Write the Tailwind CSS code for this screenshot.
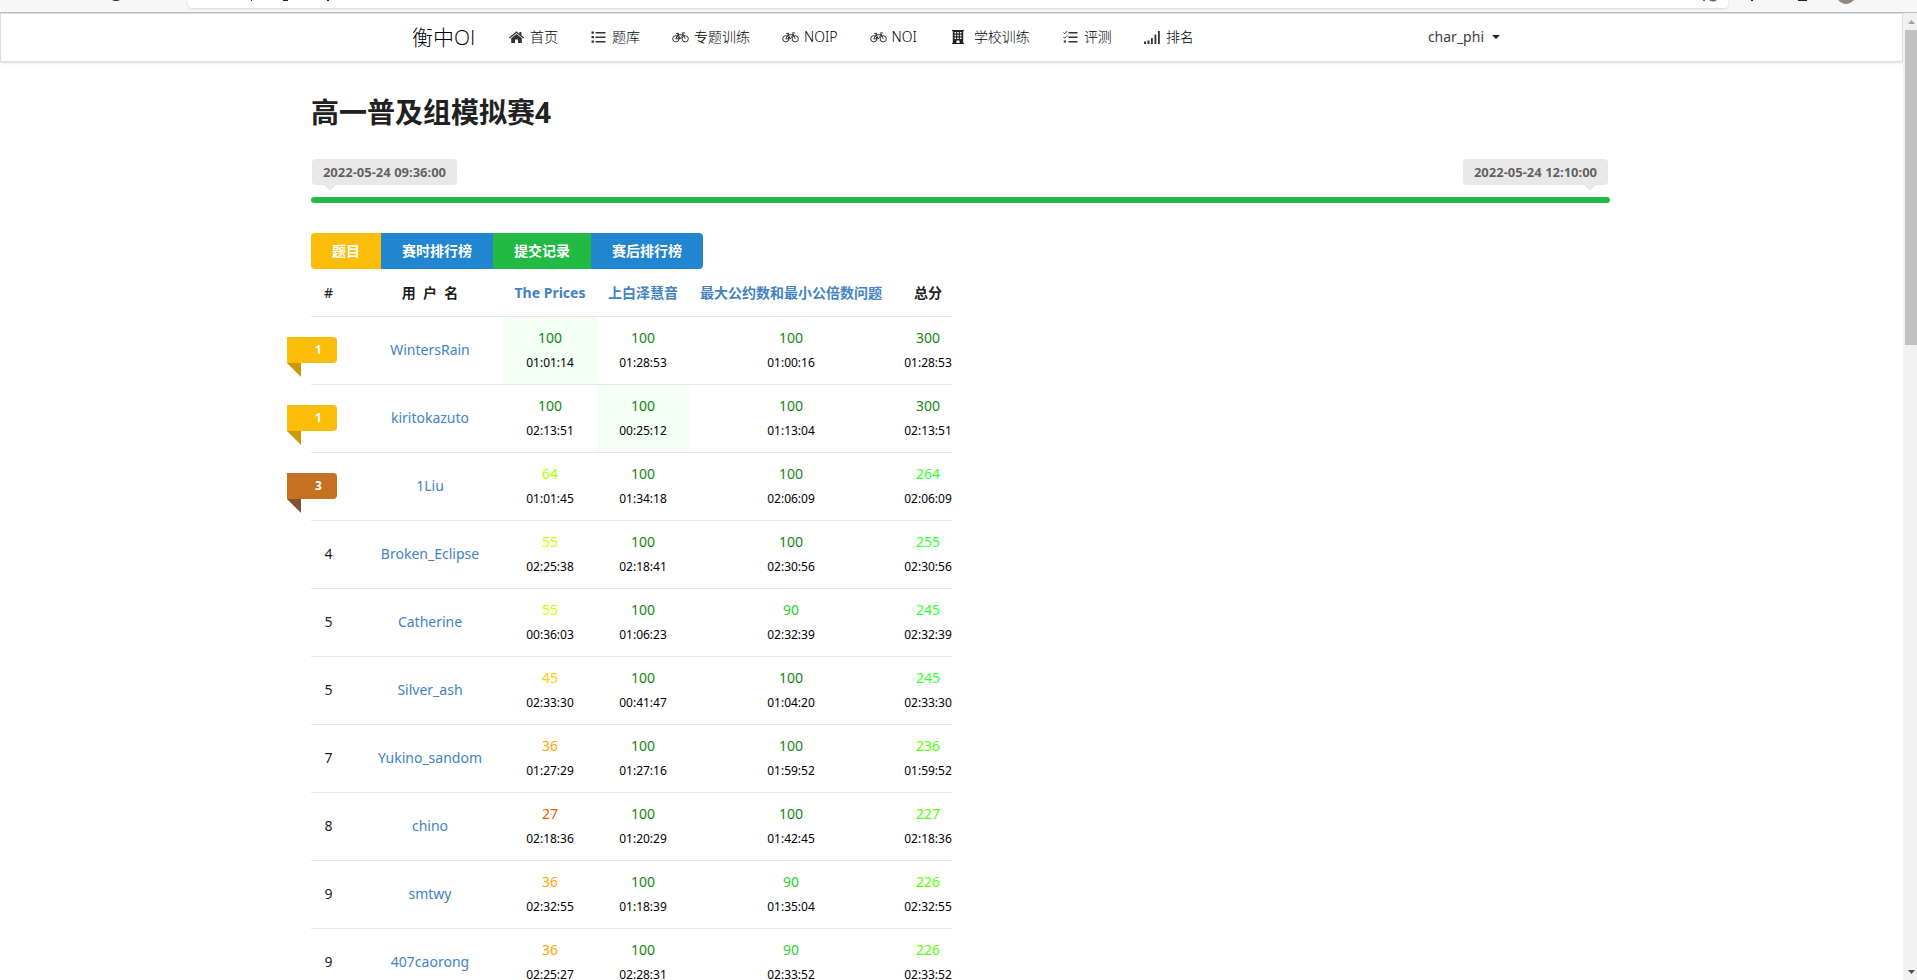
<!DOCTYPE html>
<html lang="zh-CN">
<head>
<meta charset="utf-8">
<meta name="viewport" content="width=device-width, initial-scale=1">
<title>高一普及组模拟赛4 - 衡中OI</title>
<script src="https://cdn.jsdelivr.net/npm/@tailwindcss/browser@4"></script>
</head>
<body class="flex h-screen flex-col overflow-hidden bg-white font-['Noto_Sans','Noto_Sans_CJK_SC',sans-serif] text-sm text-black/90">

<!-- Lower edge of the browser toolbar -->
<div class="flex h-[13px] shrink-0 items-start justify-between border-b border-[#bdbdbd] bg-[#f7f7f7]">
  <svg class="h-2 w-[188px] shrink-0" viewBox="0 0 188 8" aria-hidden="true"><path d="M112 0h8q-4 2-8 0z" fill="#222"/></svg>
  <div class="flex h-2 grow justify-between rounded-b bg-white shadow-sm">
    <svg class="h-2 w-48" viewBox="0 0 192 8" aria-hidden="true"><path d="M63 0h1v1h-1zM95 0h5v1h-5zM139 0h2v1h-2z" fill="#222"/></svg>
    <svg class="h-2 w-8" viewBox="0 0 32 8" aria-hidden="true"><path d="M7 0h2v1H7zM13 0h8q-4 3-8 0z" fill="#666"/></svg>
  </div>
  <svg class="h-2 w-[189px] shrink-0" viewBox="0 0 189 8" aria-hidden="true"><path d="M23 0h2v1h-2zM70 0h9v1h-9z" fill="#222"/><path d="M110 0h16q-8 8-16 0z" fill="#8f8783"/></svg>
</div>

<div class="flex min-h-0 grow">
  <div class="min-w-0 grow overflow-hidden">
    <nav class="h-[49px] border border-[#dcdcdd] bg-white shadow-sm" aria-label="主导航">
      <div class="mx-auto flex h-full max-w-[1127px] items-center pb-0.5 pl-6 font-light text-black">
        <a href="#" class="mr-[15px] w-[65px] text-[21px] leading-6 whitespace-nowrap font-['Open_Sans','Noto_Sans_CJK_SC',sans-serif] font-light">衡中OI</a>
        <a href="#" class="flex items-center gap-[5px] px-4 whitespace-nowrap">
          <svg class="h-4 w-[17px]" viewBox="0 0 17 16" fill="#333" aria-hidden="true"><path d="M8.500 2.200 1 8.500l.8 1 6.700-5.500 6.700 5.500.8-1-2.600-2.200V3h-2v1.700z"/><path d="M8.500 5 3.200 9.300V14H7v-3.600h3V14h3.800V9.300z"/></svg>首页</a>
        <a href="#" class="flex items-center gap-[5px] px-4 whitespace-nowrap">
          <svg class="h-4 w-[17px]" viewBox="0 0 17 16" fill="#333" aria-hidden="true"><path d="M1.500 2.500h2.400v2.200H1.500zM1.500 7h2.400v2.200H1.500zM1.500 11.500h2.400v2.200H1.500zM5.500 2.900h10v1.500h-10zM5.500 7.400h10v1.500h-10zM5.500 11.900h10v1.500h-10z"/></svg>题库</a>
        <a href="#" class="flex items-center gap-[5px] px-4 whitespace-nowrap">
          <svg class="h-4 w-[17px]" viewBox="0 0 17 16" fill="none" stroke="#333" aria-hidden="true"><circle cx="3.800" cy="9.800" r="3.100"/><circle cx="13.200" cy="9.800" r="3.100"/><path d="M3.800 9.800 6 5.800h5.200L8.200 9.800H3.800M8.200 9.800 5.600 4.600M4.200 4.400h2.800M13.200 9.800 10.600 3.800h2.200"/></svg>专题训练</a>
        <a href="#" class="flex items-center gap-[5px] px-4 whitespace-nowrap">
          <svg class="h-4 w-[17px]" viewBox="0 0 17 16" fill="none" stroke="#333" aria-hidden="true"><circle cx="3.800" cy="9.800" r="3.100"/><circle cx="13.200" cy="9.800" r="3.100"/><path d="M3.800 9.800 6 5.800h5.200L8.200 9.800H3.800M8.200 9.800 5.600 4.600M4.200 4.400h2.800M13.200 9.800 10.600 3.800h2.200"/></svg>NOIP</a>
        <a href="#" class="flex items-center gap-[5px] px-4 whitespace-nowrap">
          <svg class="h-4 w-[17px]" viewBox="0 0 17 16" fill="none" stroke="#333" aria-hidden="true"><circle cx="3.800" cy="9.800" r="3.100"/><circle cx="13.200" cy="9.800" r="3.100"/><path d="M3.800 9.800 6 5.800h5.200L8.200 9.800H3.800M8.200 9.800 5.600 4.600M4.200 4.400h2.800M13.200 9.800 10.600 3.800h2.200"/></svg>NOI</a>
        <a href="#" class="flex items-center gap-2 px-4 whitespace-nowrap">
          <svg class="h-4 w-[17px]" viewBox="0 0 17 16" fill="#222" aria-hidden="true"><path fill-rule="evenodd" d="M3 1h12v1h-.8v12H15v1H3v-1h.8V2H3zM5.500 3v1.600h1.600V3zM8.200 3v1.600h1.600V3zM10.900 3v1.600h1.600V3zM5.500 5.700v1.600h1.600V5.700zM8.200 5.700v1.600h1.600V5.700zM10.900 5.700v1.600h1.600V5.700zM5.500 8.400V10h1.600V8.400zM8.200 8.400V10h1.600V8.400zM10.900 8.400V10h1.600V8.400zM7.500 11.500V14h3v-2.500z"/></svg>学校训练</a>
        <a href="#" class="flex items-center gap-[5px] px-4 whitespace-nowrap">
          <svg class="h-4 w-[17px]" viewBox="0 0 17 16" fill="#333" aria-hidden="true"><path d="M6.500 2.900h9v1.500h-9zM6.500 7.400h9v1.500h-9zM6.500 11.900h9v1.500h-9zM1.800 11.600h2.200v2H1.800z"/><path d="m1.500 3.500 1.200 1.200 2.400-2.600M1.500 8l1.200 1.200 2.400-2.600" fill="none" stroke="#333"/></svg>评测</a>
        <a href="#" class="flex items-center gap-[5px] px-4 whitespace-nowrap">
          <svg class="h-4 w-[17px]" viewBox="0 0 17 16" fill="#333" aria-hidden="true"><path d="M0 12.500h2v2.500H0zM3.500 11.500h2V15h-2zM7 9h1.800v6H7zM10.500 5.500h1.800V15h-1.800zM14 2h1.800v13H14z"/></svg>排名</a>
        <button type="button" class="ml-auto flex items-center gap-2 pr-[15px] font-normal text-black/80">char_phi
          <svg class="h-1 w-2" viewBox="0 0 8 4" aria-hidden="true"><path d="M0 0h8L4 4z" fill="#222"/></svg></button>
      </div>
    </nav>

    <main class="pl-[18px]">
      <div class="mx-auto max-w-[1299px] pt-8">
        <h1 class="text-[28px] leading-9 font-bold text-[#212121]">高一普及组模拟赛4</h1>

        <div class="mt-[29px] flex justify-between pr-0.5 pl-px">
          <time class="relative h-[26px] w-[145px] rounded bg-[#e8e8e8] text-center text-[13px] leading-[26px] font-bold text-black/60">2022-05-24 09:36:00<i class="absolute -bottom-1 left-3.5 size-2 rotate-45 bg-[#e8e8e8]"></i></time>
          <time class="relative h-[26px] w-[145px] rounded bg-[#e8e8e8] text-center text-[13px] leading-[26px] font-bold text-black/60">2022-05-24 12:10:00<i class="absolute right-3.5 -bottom-1 size-2 rotate-45 bg-[#e8e8e8]"></i></time>
        </div>
        <div class="mt-3 h-1.5 rounded-[3px] bg-[#21ba45]" role="progressbar" aria-valuenow="100" aria-label="比赛进度"></div>

        <div class="mt-[30px] flex h-9 w-fit overflow-hidden rounded font-bold leading-9 text-white">
          <a href="#" class="bg-[#fbbd08] px-[21px]">题目</a>
          <a href="#" class="bg-[#2185d0] px-[21px]">赛时排行榜</a>
          <a href="#" class="bg-[#21ba45] px-[21px]">提交记录</a>
          <a href="#" class="bg-[#2185d0] px-[21px]">赛后排行榜</a>
        </div>

        <table class="w-[641px] table-fixed border-separate border-spacing-0 text-center">
          <colgroup><col class="w-[46px]"><col class="w-[146px]"><col class="w-[94px]"><col class="w-[92px]"><col class="w-[204px]"><col class="w-[59px]"></colgroup>
          <thead>
            <tr class="h-12 whitespace-nowrap">
              <th class="border-b border-[#e5e6e6] pr-[11px] font-medium">#</th>
              <th class="border-b border-[#e5e6e6] font-bold">用&nbsp;&nbsp;户&nbsp;&nbsp;名</th>
              <th class="border-b border-[#e5e6e6] font-bold"><a href="#" class="text-[#4183c4]">The Prices</a></th>
              <th class="border-b border-[#e5e6e6] font-bold"><a href="#" class="text-[#4183c4]">上白泽慧音</a></th>
              <th class="border-b border-[#e5e6e6] font-bold"><a href="#" class="text-[#4183c4]">最大公约数和最小公倍数问题</a></th>
              <th class="border-b border-[#e5e6e6] pl-[11px] font-bold">总分</th>
            </tr>
          </thead>
          <tbody id="ranks"></tbody>
        </table>
      </div>
    </main>
  </div>

  <!-- Page scrollbar -->
  <div class="flex w-3.5 shrink-0 flex-col items-end justify-between bg-[#f1f1f1]" aria-hidden="true">
    <div class="flex h-[332px] w-3 flex-col">
      <svg class="h-[17px] w-3" viewBox="0 0 12 17"><path d="M3 11h7L6.500 7z" fill="#a3a3a3"/></svg>
      <div class="grow bg-[#c1c1c1]"></div>
    </div>
    <svg class="h-[17px] w-3" viewBox="0 0 12 17"><path d="M3 7h7l-3.500 4z" fill="#505050"/></svg>
  </div>
</div>

<script>
const green = 'text-[#158415]', lime = 'text-[#32cd32]';
const bright = 'text-[#33ff33]', lawn = 'text-[#55ff00]';
const gold = ['bg-[#fbbd08]', 'fill-[#cd9903]'], bronze = ['bg-[#c47222]', 'fill-[#845130]'];
// place, name, [score, time, colour] for each problem and the total, ribbon, column of the first solve
const rows = [
  [1, 'WintersRain', [100, '01:01:14', green], [100, '01:28:53', green], [100, '01:00:16', green], [300, '01:28:53', green], gold, 0],
  [1, 'kiritokazuto', [100, '02:13:51', green], [100, '00:25:12', green], [100, '01:13:04', green], [300, '02:13:51', green], gold, 1],
  [3, '1Liu', [64, '01:01:45', 'text-[#aaff00]'], [100, '01:34:18', green], [100, '02:06:09', green], [264, '02:06:09', bright], bronze],
  [4, 'Broken_Eclipse', [55, '02:25:38', 'text-[#ccff00]'], [100, '02:18:41', green], [100, '02:30:56', green], [255, '02:30:56', bright]],
  [5, 'Catherine', [55, '00:36:03', 'text-[#ccff00]'], [100, '01:06:23', green], [90, '02:32:39', lime], [245, '02:32:39', bright]],
  [5, 'Silver_ash', [45, '02:33:30', 'text-[#ffcc00]'], [100, '00:41:47', green], [100, '01:04:20', green], [245, '02:33:30', bright]],
  [7, 'Yukino_sandom', [36, '01:27:29', 'text-[#ffa500]'], [100, '01:27:16', green], [100, '01:59:52', green], [236, '01:59:52', lawn]],
  [8, 'chino', [27, '02:18:36', 'text-[#ff5500]'], [100, '01:20:29', green], [100, '01:42:45', green], [227, '02:18:36', lawn]],
  [9, 'smtwy', [36, '02:32:55', 'text-[#ffa500]'], [100, '01:18:39', green], [90, '01:35:04', lime], [226, '02:32:55', lawn]],
  [9, '407caorong', [36, '02:25:27', 'text-[#ffa500]'], [100, '02:28:31', green], [90, '02:33:52', lime], [226, '02:33:52', lawn]],
];
document.getElementById('ranks').innerHTML = rows.map(([place, name, a, b, c, total, ribbon, first]) => {
  const rank = ribbon
    ? `<span class="absolute top-5 -left-6 h-[26px] w-[50px] rounded-r pl-7 text-left text-xs leading-[26px] font-bold text-white ${ribbon[0]}">${place}<svg class="absolute top-full left-0 size-3.5 ${ribbon[1]}" viewBox="0 0 14 14"><path d="M0 0h14v14z"/></svg></span>`
    : place;
  const cells = [a, b, c, total].map(([score, time, colour], i) =>
    `<td class="border-b border-[#e5e6e6] pt-2 pb-[9px] leading-[25px] ${i === first ? 'bg-[#f4fff5]' : ''} ${i === 3 ? 'pl-[11px]' : ''}"><a href="#" class="block ${colour}">${score}</a><div class="text-xs leading-[25px] text-black">${time}</div></td>`).join('');
  return `<tr><td class="relative border-b border-[#e5e6e6] pr-[11px] pb-0.5">${rank}</td><td class="border-b border-[#e5e6e6] pb-0.5"><a href="#" class="text-[#4183c4]">${name}</a></td>${cells}</tr>`;
}).join('');
</script>
</body>
</html>
